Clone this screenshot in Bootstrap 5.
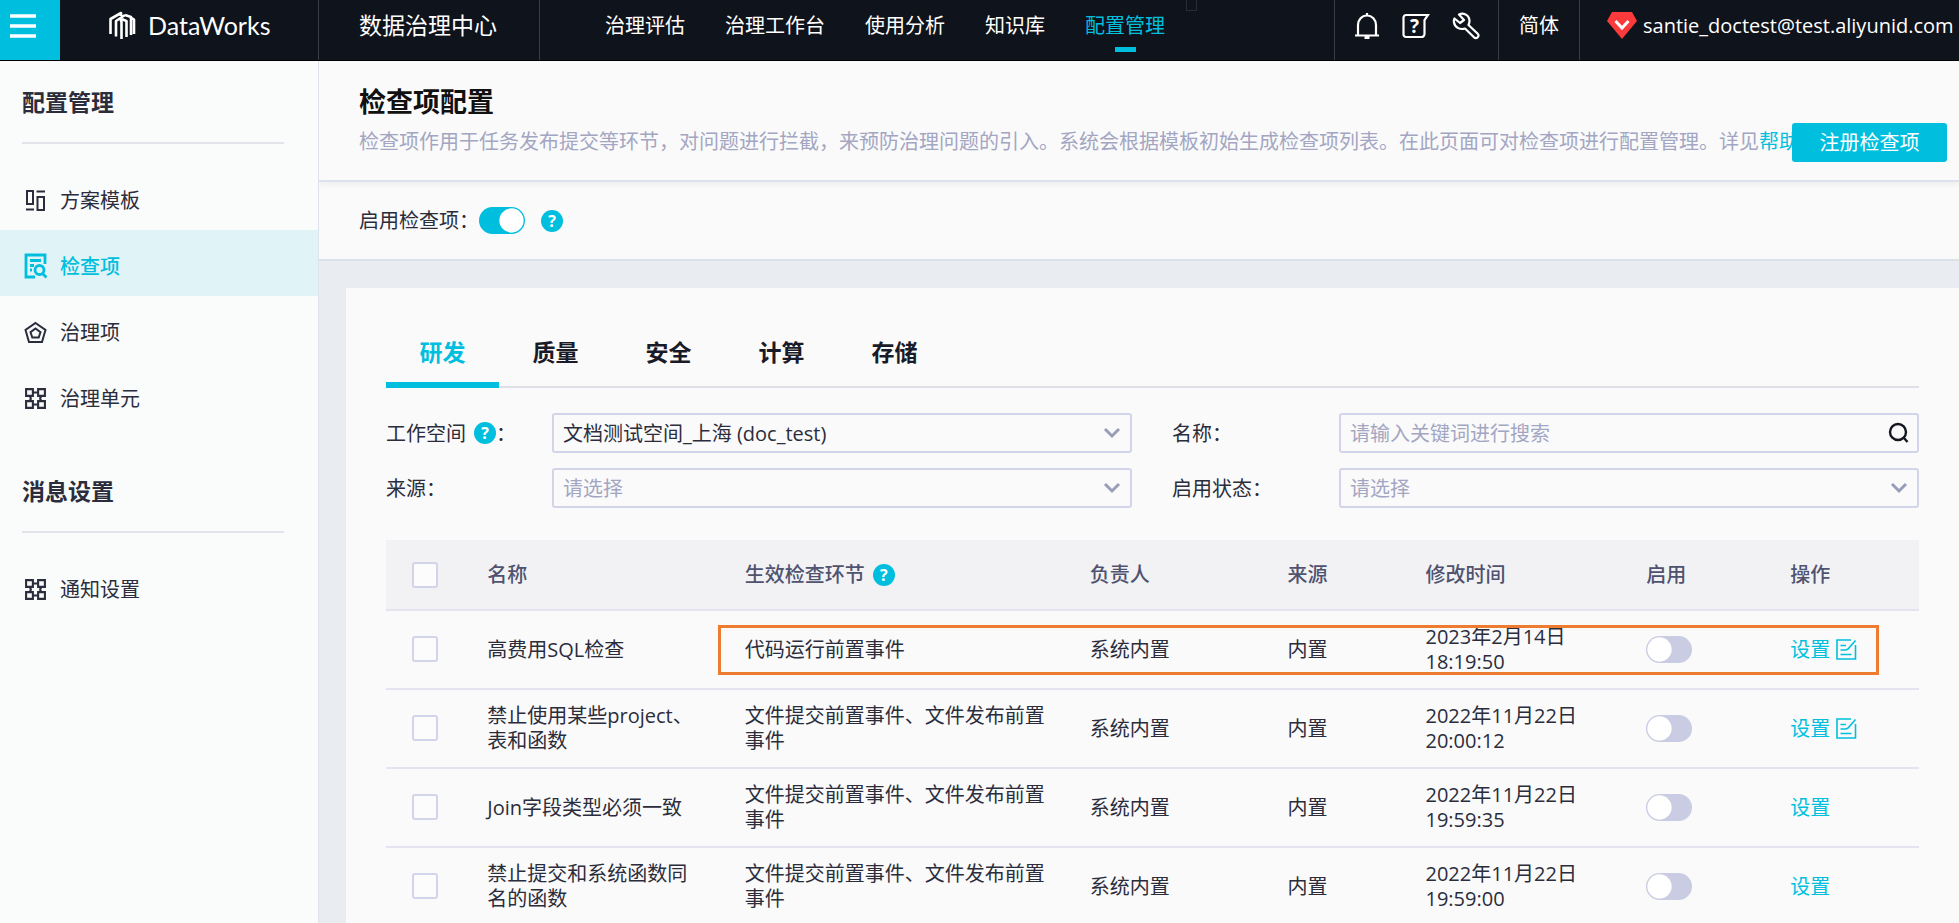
<!DOCTYPE html>
<html lang="zh-CN">
<head>
<meta charset="utf-8">
<meta name="viewport" content="width=device-width, initial-scale=1">
<title>DataWorks 数据治理中心</title>
<link href="https://cdn.jsdelivr.net/npm/bootstrap@5.3.0/dist/css/bootstrap.min.css" rel="stylesheet">
<style>
:root{--brand:#00bfde;--ink:#2b2d3c;--line:#dfe1ee;--field:#d2d5ea;--muted:#a3a6c2;--surface:#fafafa}
body{font-family:"Open Sans","Noto Sans CJK SC",sans-serif;font-size:20px;line-height:25px;color:var(--ink);background:#e9edf1}
a{text-decoration:none}
button{font:inherit}
/* top bar */
.topbar{height:61px;background:#0f131b;color:#fff;border-bottom:1px solid #000;white-space:nowrap}
.topbar a,.topbar button{color:#fff}
.topbar .cell{padding-bottom:9px}
.topbar .split{border-right:1px solid #3a3d45}
.menu-btn{width:60px;background:var(--brand)!important}
.menu-btn svg{margin:0 14px 8px 0}
.brand{width:259px;padding-left:48px;gap:12px;font-family:Lato,sans-serif;font-size:25px}
.product{width:221px;padding-left:40px;font-size:23px}
.mainnav{gap:40px;padding-left:65px}
.mainnav a{position:relative}
.mainnav a.active{color:var(--brand)}
.mainnav a.active::after{content:"";position:absolute;left:50%;bottom:-14px;width:21px;height:5px;margin-left:-10px;background:var(--brand)}
.tools{width:165px;padding-left:19px;gap:22px;border-left:1px solid #3a3d45}
.lang{width:81px}
.account{width:379px;padding-left:27px;gap:6px}
.stub{width:11px;height:11px;border:1px solid #292b35;border-top:0;margin-left:21px}
/* sidebar */
.side{width:319px;padding-top:26px;background:#fafbfb;border-right:1px solid var(--line)}
.side h2{font-size:23px;line-height:30px;font-weight:700;margin:0 34px 0 22px;padding-bottom:25px;border-bottom:2px solid #e3e4ea}
.side ul{margin:0;padding-top:20px}
.side ul + h2{padding-top:48px}
.side a{display:flex;align-items:center;gap:13px;height:66px;padding:6px 0 0 24px;color:var(--ink)}
.side li.active{background:#e0f3f7}
.side li.active a{color:var(--brand);font-weight:500}
/* page head */
.pagehead{background:var(--surface);border-bottom:2px solid #dde2ef;padding:25px 12px 18px 40px;box-shadow:0 3px 6px rgba(0,0,0,.05);position:relative}
.pagehead h1{font-size:27px;line-height:32px;font-weight:700;color:#111;margin:0 0 5px}
.intro{color:var(--muted);min-width:0;padding-bottom:3px}
.intro a,.op{color:var(--brand)}
.btn-brand{position:relative;background:var(--brand);color:#fff;width:155px;height:39px;border:0;border-radius:3px;flex:none}
.enable{background:var(--surface);height:79px;padding-left:40px;border-bottom:2px solid #dde1ea}
.hint{display:inline-flex;flex:none;width:22px;height:22px;border-radius:50%;background:var(--brand);color:#fff;align-items:center;justify-content:center;font-size:16px;line-height:22px;font-weight:700;border:0;padding:0}
.form-switch{padding:0;margin:0;min-height:0;display:flex}
.form-switch .form-check-input{width:46px;height:27px;margin:0;float:none;border:0;background-color:#c9cce2;background-image:url("data:image/svg+xml,%3csvg xmlns='http://www.w3.org/2000/svg' viewBox='-4 -4 8 8'%3e%3ccircle r='3.6' fill='%23fff'/%3e%3c/svg%3e")}
.form-switch .form-check-input:checked{background-color:var(--brand)}
/* panel */
.panel{background:var(--surface);margin:27px 0 0 27px;padding:28px 40px 0}
.tabs{border-bottom:2px solid #dfe0e6;margin-bottom:25px}
.tabs button{width:113px;height:72px;border:0;background:none;font-size:23px;font-weight:700;color:#1a1b28;padding:6px 0 0;margin-bottom:-2px;border-bottom:6px solid transparent}
.tabs button.active{color:var(--brand);border-color:var(--brand)}
.filters{display:grid;grid-template-columns:126px minmax(0,1fr) 127px minmax(0,1fr);gap:15px 40px;align-items:center;margin-bottom:32px}
.filters .form-select,.filters .form-control{height:40px;border:2px solid var(--field);border-radius:3px;background-color:var(--surface);font-size:20px;line-height:25px;padding:0 40px 0 9px;color:var(--ink)}
.filters .form-select{background-image:url("data:image/svg+xml,%3csvg xmlns='http://www.w3.org/2000/svg' viewBox='0 0 18 12'%3e%3cpath d='M2 2l7 7 7-7' fill='none' stroke='%239a9dba' stroke-width='3'/%3e%3c/svg%3e");background-size:18px 12px;background-position:right 9px center}
.filters .form-select.empty,.filters .form-control::placeholder{color:var(--muted)}
.search-btn{position:absolute;right:9px;top:8px;padding:0;border:0;background:none;line-height:0}
/* table */
.grid-table{table-layout:fixed;width:100%;margin:0}
.grid-table th,.grid-table td{padding:13px 16px 14px 17px;height:79px;border-bottom:2px solid #e3e4f0;vertical-align:middle}
.grid-table th{height:70px;padding:0 16px 0 17px;background:#f2f2f4;font-weight:500;color:#50536f}
.grid-table th:first-child,.grid-table td:first-child{padding-left:26px}
.grid-table td:nth-child(2){padding-right:23px}
.grid-table .form-check-input{margin:0;display:block}
.grid-table input.pick{width:26px;height:26px;border:2px solid var(--field);border-radius:3px;background-color:#fcfcfc}
.focus-frame{position:absolute;left:332px;right:40px;top:85px;height:50px;border:3px solid #ee7c30;pointer-events:none}
</style>
</head>
<body>
<svg width="0" height="0" class="position-absolute" aria-hidden="true">
  <symbol id="units" viewBox="0 0 22 22"><path fill="none" stroke="currentColor" stroke-width="2" d="M2 2h6.500v6.500H2zM13.500 2H20v6.500h-6.500zM2 13.500h6.500V20H2zM13.500 13.500H20V20h-6.500zM8.500 5.200h5M8.500 16.800h5M5.500 8.500Q7.500 11 5.500 13.500M16.500 8.500Q14.500 11 16.500 13.500"/></symbol>
  <symbol id="edit" viewBox="0 0 21 21"><path fill="none" stroke="currentColor" stroke-width="1.600" d="M15 1H1v19h18.500V6M4.500 6.500H10M4.500 11H10l2-1L19.500 1.500M4.500 15.500h11"/></symbol>
</svg>
<div class="vh-100 d-flex flex-column overflow-hidden">
<header class="topbar d-flex overflow-hidden flex-shrink-0">
  <button class="menu-btn border-0 p-0 flex-shrink-0" aria-label="菜单"><svg width="26" height="24" viewBox="0 0 26 24"><path d="M0 2h26M0 12h26M0 22h26" stroke="#fff" stroke-width="3.500"/></svg></button>
  <a href="#" class="brand cell split d-flex align-items-center flex-shrink-0">
    <svg width="28" height="29" viewBox="0 0 28 29"><g fill="none" stroke="#fff" stroke-width="2.600" stroke-linejoin="round"><path d="M2.500 23V8L13 2v3M8 25.500V10l9-6M13.500 28V11l-1-3M18.500 26V10l-5-2M17 4l6 2v18M22 6l4 2.500V23"/></g></svg>
    <span>DataWorks</span></a>
  <a href="#" class="product cell split d-flex align-items-center flex-shrink-0">数据治理中心</a>
  <nav class="mainnav cell d-flex align-items-center">
    <a href="#">治理评估</a><a href="#">治理工作台</a><a href="#">使用分析</a><a href="#">知识库</a><a href="#" class="active">配置管理</a>
  </nav>
  <span class="stub"></span>
  <div class="tools cell split d-flex align-items-center ms-auto flex-shrink-0">
    <a href="#" class="d-flex" aria-label="通知"><svg width="26" height="28" viewBox="0 0 26 28" fill="none" stroke="#fff" stroke-width="2.200"><path d="M1 23.500h24M4 23V13a9 9.500 0 0 1 18 0v10M13 1v3"/><path d="M10.500 25.500h5" stroke-width="3"/></svg></a>
    <a href="#" class="d-flex" aria-label="帮助"><svg width="28" height="28" viewBox="0 0 28 28"><path d="M4 3h22l-3.500 5v14a3 3 0 0 1-3 3H4a2.500 2.500 0 0 1-2.500-2.500v-17A2.500 2.500 0 0 1 4 3z" fill="none" stroke="#fff" stroke-width="2.200"/><text x="12.500" y="21" text-anchor="middle" font-size="19" font-weight="700" fill="#fff">?</text></svg></a>
    <a href="#" class="d-flex" aria-label="工具"><svg width="28" height="28" viewBox="0 0 28 28"><path d="M7 2.500c4-2 10 0 10.500 6 .1 2-.3 3-1 4.500l9 8.500c2.500 2.500-.8 6-3.500 3.800L13 16.500c-4.500 1.500-10-.5-11-6-.3-1.500 0-3 .5-4L8 11l4-3z" fill="none" stroke="#fff" stroke-width="2.200" stroke-linejoin="round"/></svg></a>
  </div>
  <a href="#" class="lang cell split d-flex align-items-center justify-content-center flex-shrink-0">简体</a>
  <a href="#" class="account cell d-flex align-items-center flex-shrink-0 overflow-hidden">
    <svg class="flex-shrink-0" width="30" height="27" viewBox="0 0 30 27"><path d="M5 0h20l5 9-15 18L0 9z" fill="#fb3a3b"/><path d="M8.500 9l6.500 7 6.500-7" fill="none" stroke="#fff" stroke-width="3"/></svg>
    <span>santie_doctest@test.aliyunid.com</span></a>
</header>
<div class="d-flex flex-grow-1 overflow-hidden">
  <aside class="side flex-shrink-0">
    <h2>配置管理</h2>
    <ul class="list-unstyled">
      <li><a href="#"><svg width="23" height="23" viewBox="0 0 23 23" fill="none" stroke="currentColor" stroke-width="2"><path d="M3 2h6v13H3zM13.500 8H20v13h-6.500zM2 20.500h8M12.500 2.500H21"/></svg>方案模板</a></li>
      <li class="active"><a href="#"><svg width="23" height="26" viewBox="0 0 23 26" fill="none" stroke="currentColor" stroke-width="2.800"><path d="M21 11V2H2v22h9M6 7.500h11M6 12.500h4M6 17h2"/><circle cx="15.500" cy="17" r="4.500"/><path d="M18.500 20.500l4 4"/></svg>检查项</a></li>
      <li><a href="#"><svg width="23" height="23" viewBox="0 0 23 23" fill="none" stroke="currentColor" stroke-width="2"><path d="M11.500 2L21.500 9 18 21H5L1.500 9zM11.500 7.500l5 3.700-1.800 5.300H8.300L6.500 11.200z"/></svg>治理项</a></li>
      <li><a href="#"><svg width="23" height="23"><use href="#units"/></svg>治理单元</a></li>
    </ul>
    <h2>消息设置</h2>
    <ul class="list-unstyled">
      <li><a href="#"><svg width="23" height="23"><use href="#units"/></svg>通知设置</a></li>
    </ul>
  </aside>
  <main class="flex-grow-1 overflow-hidden">
    <section class="pagehead">
      <h1>检查项配置</h1>
      <div class="d-flex align-items-center">
        <div class="intro flex-grow-1 text-nowrap">检查项作用于任务发布提交等环节，对问题进行拦截，来预防治理问题的引入。系统会根据模板初始生成检查项列表。在此页面可对检查项进行配置管理。详见<a href="#">帮助</a></div>
        <button class="btn-brand" type="button">注册检查项</button>
      </div>
    </section>
    <section class="enable d-flex align-items-center">
      <label for="sw-all">启用检查项：</label>
      <div class="form-check form-switch"><input class="form-check-input" type="checkbox" role="switch" id="sw-all" checked></div>
      <button class="hint ms-3" type="button">?</button>
    </section>
    <section class="panel">
      <div class="tabs d-flex" role="tablist">
        <button class="active" role="tab" aria-selected="true">研发</button><button role="tab">质量</button><button role="tab">安全</button><button role="tab">计算</button><button role="tab">存储</button>
      </div>
      <form class="filters">
        <label for="f-space" class="d-flex align-items-center text-nowrap">工作空间<span class="hint ms-2">?</span>：</label>
        <select id="f-space" class="form-select"><option>文档测试空间_上海 (doc_test)</option></select>
        <label for="f-name">名称：</label>
        <div class="position-relative"><input id="f-name" class="form-control" type="text" placeholder="请输入关键词进行搜索"><button class="search-btn" type="button" aria-label="搜索"><svg width="23" height="23" viewBox="0 0 23 23" fill="none" stroke="#15161f" stroke-width="2.400"><circle cx="11" cy="11" r="8"/><path d="M16.500 16.500l4 4.500"/></svg></button></div>
        <label for="f-source">来源：</label>
        <select id="f-source" class="form-select empty"><option>请选择</option></select>
        <label for="f-state">启用状态：</label>
        <select id="f-state" class="form-select empty"><option>请选择</option></select>
      </form>
      <div class="position-relative">
      <table class="grid-table">
        <colgroup><col style="width:5.500%"><col style="width:16.800%"><col style="width:22.500%"><col style="width:12.900%"><col style="width:9%"><col style="width:14.400%"><col style="width:9.400%"><col></colgroup>
        <thead><tr>
          <th><input class="form-check-input pick" type="checkbox" aria-label="全选"></th><th>名称</th>
          <th><span class="d-flex align-items-center">生效检查环节<span class="hint ms-2">?</span></span></th>
          <th>负责人</th><th>来源</th><th>修改时间</th><th>启用</th><th>操作</th>
        </tr></thead>
        <tbody>
          <tr><td><input class="form-check-input pick" type="checkbox" aria-label="选择"></td><td>高费用SQL检查</td><td>代码运行前置事件</td><td>系统内置</td><td>内置</td><td>2023年2月14日 18:19:50</td>
            <td><div class="form-check form-switch"><input class="form-check-input" type="checkbox" role="switch" aria-label="启用"></div></td>
            <td><a href="#" class="op d-flex align-items-center">设置<svg class="ms-1" width="25" height="21"><use href="#edit"/></svg></a></td></tr>
          <tr><td><input class="form-check-input pick" type="checkbox" aria-label="选择"></td><td>禁止使用某些project、表和函数</td><td>文件提交前置事件、文件发布前置事件</td><td>系统内置</td><td>内置</td><td>2022年11月22日 20:00:12</td>
            <td><div class="form-check form-switch"><input class="form-check-input" type="checkbox" role="switch" aria-label="启用"></div></td>
            <td><a href="#" class="op d-flex align-items-center">设置<svg class="ms-1" width="25" height="21"><use href="#edit"/></svg></a></td></tr>
          <tr><td><input class="form-check-input pick" type="checkbox" aria-label="选择"></td><td>Join字段类型必须一致</td><td>文件提交前置事件、文件发布前置事件</td><td>系统内置</td><td>内置</td><td>2022年11月22日 19:59:35</td>
            <td><div class="form-check form-switch"><input class="form-check-input" type="checkbox" role="switch" aria-label="启用"></div></td>
            <td><a href="#" class="op">设置</a></td></tr>
          <tr><td><input class="form-check-input pick" type="checkbox" aria-label="选择"></td><td>禁止提交和系统函数同名的函数</td><td>文件提交前置事件、文件发布前置事件</td><td>系统内置</td><td>内置</td><td>2022年11月22日 19:59:00</td>
            <td><div class="form-check form-switch"><input class="form-check-input" type="checkbox" role="switch" aria-label="启用"></div></td>
            <td><a href="#" class="op">设置</a></td></tr>
        </tbody>
      </table>
      <div class="focus-frame"></div>
      </div>
    </section>
  </main>
</div>
</div>
<script src="https://cdn.jsdelivr.net/npm/bootstrap@5.3.0/dist/js/bootstrap.bundle.min.js"></script>
</body>
</html>
